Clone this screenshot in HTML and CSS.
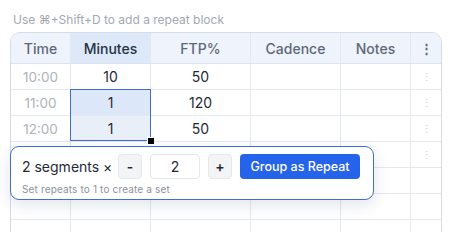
FILE: index.html
```html
<!DOCTYPE html>
<html>
<head>
<meta charset="utf-8">
<link rel="stylesheet" href="styles.css">
</head>
<body>
<div class="page">
  <div class="hint">Use ⌘+Shift+D to add a repeat block</div>
  <div class="wrap">
    <div class="grid">
      <div class="cell head">Time</div>
      <div class="cell head head-sel">Minutes</div>
      <div class="cell head">FTP%</div>
      <div class="cell head">Cadence</div>
      <div class="cell head">Notes</div>
      <div class="cell head menu-h">⋮</div>

      <div class="cell time">10:00</div>
      <div class="cell">10</div>
      <div class="cell">50</div>
      <div class="cell"></div>
      <div class="cell"></div>
      <div class="cell menu">⋮</div>

      <div class="cell time">11:00</div>
      <div class="cell sel1">1</div>
      <div class="cell">120</div>
      <div class="cell"></div>
      <div class="cell"></div>
      <div class="cell menu">⋮</div>

      <div class="cell time">12:00</div>
      <div class="cell sel2">1</div>
      <div class="cell">50</div>
      <div class="cell"></div>
      <div class="cell"></div>
      <div class="cell menu">⋮</div>

      <div class="cell time"></div>
      <div class="cell"></div>
      <div class="cell"></div>
      <div class="cell"></div>
      <div class="cell"></div>
      <div class="cell menu">⋮</div>

      <div class="cell"></div><div class="cell"></div><div class="cell"></div><div class="cell"></div><div class="cell"></div><div class="cell menu"></div>
      <div class="cell"></div><div class="cell"></div><div class="cell"></div><div class="cell"></div><div class="cell"></div><div class="cell menu"></div>
      <div class="cell"></div><div class="cell"></div><div class="cell"></div><div class="cell"></div><div class="cell"></div><div class="cell menu"></div>
    </div>
    <div class="selection"><span class="handle"></span></div>
    <div class="popover">
      <div class="controls">
        <span class="label">2 segments ×</span>
        <button class="step">-</button>
        <div class="count">2</div>
        <button class="step">+</button>
        <button class="group">Group as Repeat</button>
      </div>
      <div class="sub">Set repeats to 1 to create a set</div>
    </div>
  </div>
</div>
</body>
</html>
```

FILE: styles.css
```css
* { box-sizing: border-box; }
html, body { margin: 0; padding: 0; background: #ffffff; }
body { font-family: Inter, "Noto Sans", sans-serif; color: #1f2937; overflow: hidden; }
.page { padding: 13px 10px 0 10px; width: 461px; height: 232px; overflow: hidden; }
.hint { font-size: 12px; line-height: 14px; color: #a2a8b0; padding-left: 3px; height: 19px; }
.wrap { position: relative; width: 432px; }
.grid {
  display: grid;
  grid-template-columns: 60px 80px 100px 90px 70px 30px;
  grid-template-rows: 31px repeat(7, 26px);
  border: 1px solid #d5dbe7;
  border-radius: 10px 10px 0 0;
  overflow: hidden;
}
.cell {
  border-right: 1px solid #e4e8ef;
  border-bottom: 1px solid #e4e8ef;
  display: flex;
  align-items: center;
  justify-content: center;
  font-size: 14px;
  color: #1f2937;
}
.cell:nth-child(6n) { border-right: none; }
.head { background: #eff4fc; color: #5e6879; font-weight: 500; border-bottom-color: #dde3ee; }
.head-sel { background: #dde9f9; color: #263143; }
.time { color: #aeb3ba; font-size: 13.5px; }
.menu { color: #cdd2d9; font-size: 11px; }
.menu-h { color: #5f6878; font-size: 13px; font-weight: 700; }
.sel1 { background: #dce8f9; }
.sel2 { background: #e9eff9; }
.selection {
  position: absolute;
  left: 60px; top: 57px;
  width: 81px; height: 52px;
  border: 1px solid #3e6fcf;
  pointer-events: none;
}
.handle {
  position: absolute;
  right: -4px; bottom: -4px;
  width: 6px; height: 6px;
  background: #000;
  border: 1px solid #fff;
  box-sizing: content-box;
  margin: -1px;
}
.popover {
  position: absolute;
  left: 0; top: 114px;
  width: 364px; height: 54px;
  background: #fff;
  border: 1px solid #3e6fcf;
  border-radius: 9px;
  box-shadow: 0 5px 16px rgba(30, 50, 90, 0.13);
  padding: 7px 11px 0 11px;
}
.controls { display: flex; align-items: center; gap: 8px; height: 25px; }
.label { font-size: 14px; color: #1f2937; width: 88px; white-space: nowrap; }
.step {
  width: 24px; height: 25px;
  border: 1px solid #e5e7eb;
  border-radius: 4px;
  background: #f3f4f6;
  font-family: Inter, sans-serif;
  font-size: 14px;
  font-weight: 600;
  color: #1f2937;
  padding: 0;
}
.count {
  width: 50px; height: 25px;
  border: 1px solid #e5e7eb;
  border-radius: 4px;
  display: flex; align-items: center; justify-content: center;
  font-size: 14px;
}
.group {
  width: 120px; height: 25px;
  border: none;
  border-radius: 4px;
  background: #2563eb;
  color: #fff;
  font-family: Inter, sans-serif;
  font-size: 12.5px;
  font-weight: 500;
  padding: 0;
}
.sub { font-size: 10px; color: #8b929c; margin-top: 4px; line-height: 12px; letter-spacing: 0.15px; }
```
